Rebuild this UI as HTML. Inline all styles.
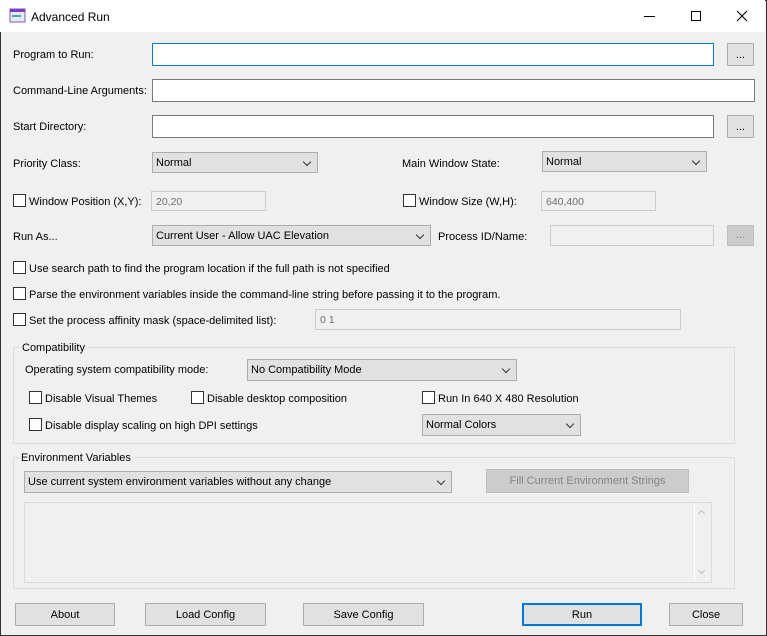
<!DOCTYPE html>
<html><head><style>
*{box-sizing:border-box;margin:0;padding:0}
body{width:767px;height:636px;background:#f0f0f0;font-family:"Liberation Sans",sans-serif;font-size:11px;color:#000;position:relative;overflow:hidden}
.win{position:absolute;left:0;top:0;width:767px;height:636px;border:1px solid #333;}
.tb{position:absolute;left:0;top:0;width:765px;height:32px;background:#fff}
.a{position:absolute;white-space:nowrap}
.l{margin-top:2px}
.in{position:absolute;background:#fff;border:1px solid #7a7a7a}
.in.f{border-color:#0078d7}
.dis{position:absolute;background:#f0f0f0;border:1px solid #ccc;color:#6d6d6d;padding:4px 4px;font-size:10.5px}
.btn{position:absolute;background:#e1e1e1;border:1px solid #adadad;text-align:center;line-height:22px}
.btn.d{background:#ccc;border-color:#bfbfbf;color:#838383}
.sel{position:absolute;background:#e1e1e1;border:1px solid #adadad;padding:0 3px;line-height:21px}
.sel:after{content:"";position:absolute;right:7px;top:6px;width:5px;height:5px;border-right:1px solid #333;border-bottom:1px solid #333;transform:rotate(45deg)}
.cb{position:absolute;width:13px;height:13px;border:1px solid #333;background:#fff}
.grp{position:absolute;border:1px solid #dcdcdc}
.gl{position:absolute;background:#f0f0f0;padding:0 2px}
</style></head><body>
<div class="win"></div>
<div class="tb">
 <svg class="a" style="left:9px;top:8px" width="17" height="15"><rect x="1" y="1" width="15" height="13" fill="#e8e8f4" stroke="#7a5ca8"/><rect x="1" y="1" width="15" height="3" fill="#7b3fbf"/><rect x="3" y="7" width="9" height="2" fill="#4ab"/></svg>
 <div class="a" style="left:31px;top:10px;font-size:12px">Advanced Run</div>
 <div class="a" style="left:644px;top:16px;width:11px;height:1px;background:#000"></div>
 <div class="a" style="left:691px;top:11px;width:10px;height:10px;border:1px solid #000"></div>
 <svg class="a" style="left:736px;top:10px" width="12" height="12"><path d="M1 1L11 11M11 1L1 11" stroke="#000" stroke-width="1.1"/></svg>
</div>

<div class="a l" style="left:13px;top:47px">Program to Run:</div>
<div class="in f" style="left:152px;top:43px;width:562px;height:23px"></div>
<div class="btn" style="left:727px;top:43px;width:27px;height:23px">...</div>

<div class="a l" style="left:13px;top:83px">Command-Line Arguments:</div>
<div class="in" style="left:152px;top:79px;width:603px;height:23px"></div>

<div class="a l" style="left:13px;top:119px">Start Directory:</div>
<div class="in" style="left:152px;top:115px;width:562px;height:23px"></div>
<div class="btn" style="left:727px;top:115px;width:27px;height:23px">...</div>

<div class="a l" style="left:13px;top:156px">Priority Class:</div>
<div class="sel" style="left:152px;top:152px;width:166px;height:21px">Normal</div>
<div class="a l" style="left:402px;top:156px">Main Window State:</div>
<div class="sel" style="left:542px;top:151px;width:165px;height:21px">Normal</div>

<div class="cb" style="left:13px;top:194px"></div>
<div class="a l" style="left:29px;top:194px">Window Position (X,Y):</div>
<div class="dis" style="left:151px;top:191px;width:115px;height:20px">20,20</div>
<div class="cb" style="left:403px;top:194px"></div>
<div class="a l" style="left:419px;top:194px">Window Size (W,H):</div>
<div class="dis" style="left:541px;top:191px;width:115px;height:20px">640,400</div>

<div class="a l" style="left:13px;top:229px">Run As...</div>
<div class="sel" style="left:152px;top:225px;width:279px;height:21px">Current User - Allow UAC Elevation</div>
<div class="a l" style="left:438px;top:229px">Process ID/Name:</div>
<div class="dis" style="left:550px;top:225px;width:164px;height:21px"></div>
<div class="btn d" style="left:727px;top:225px;width:27px;height:21px;line-height:19px">...</div>

<div class="cb" style="left:13px;top:261px"></div>
<div class="a l" style="left:29px;top:261px">Use search path to find the program location if the full path is not specified</div>
<div class="cb" style="left:13px;top:287px"></div>
<div class="a l" style="left:29px;top:287px">Parse the environment variables inside the command-line string before passing it to the program.</div>
<div class="cb" style="left:13px;top:313px"></div>
<div class="a l" style="left:29px;top:313px">Set the process affinity mask (space-delimited list):</div>
<div class="dis" style="left:315px;top:309px;width:366px;height:21px">0 1</div>

<div class="grp" style="left:13px;top:347px;width:722px;height:97px"></div>
<div class="gl" style="left:20px;top:342px">Compatibility</div>
<div class="a l" style="left:25px;top:362px">Operating system compatibility mode:</div>
<div class="sel" style="left:247px;top:359px;width:270px;height:22px">No Compatibility Mode</div>
<div class="cb" style="left:29px;top:391px"></div>
<div class="a l" style="left:45px;top:391px">Disable Visual Themes</div>
<div class="cb" style="left:191px;top:391px"></div>
<div class="a l" style="left:207px;top:391px">Disable desktop composition</div>
<div class="cb" style="left:422px;top:391px"></div>
<div class="a l" style="left:438px;top:391px">Run In 640 X 480 Resolution</div>
<div class="cb" style="left:29px;top:418px"></div>
<div class="a l" style="left:45px;top:418px">Disable display scaling on high DPI settings</div>
<div class="sel" style="left:422px;top:414px;width:159px;height:22px">Normal Colors</div>

<div class="grp" style="left:13px;top:457px;width:722px;height:132px"></div>
<div class="gl" style="left:19px;top:452px">Environment Variables</div>
<div class="sel" style="left:24px;top:471px;width:428px;height:22px">Use current system environment variables without any change</div>
<div class="btn d" style="left:486px;top:469px;width:203px;height:24px">Fill Current Environment Strings</div>
<div class="a" style="left:24px;top:502px;width:688px;height:81px;border:1px solid #d9d9d9;background:#f0f0f0"></div>
<div class="a" style="left:694px;top:503px;width:17px;height:79px;border-left:1px solid #fff"></div>
<div class="a" style="left:699px;top:511px;width:5px;height:5px;border-left:1px solid #bbb;border-top:1px solid #bbb;transform:rotate(45deg)"></div>
<div class="a" style="left:699px;top:568px;width:5px;height:5px;border-right:1px solid #bbb;border-bottom:1px solid #bbb;transform:rotate(45deg)"></div>

<div class="btn" style="left:15px;top:603px;width:100px;height:23px">About</div>
<div class="btn" style="left:145px;top:603px;width:121px;height:23px">Load Config</div>
<div class="btn" style="left:303px;top:603px;width:121px;height:23px">Save Config</div>
<div class="btn" style="left:522px;top:603px;width:120px;height:23px;border:2px solid #0078d7;line-height:20px">Run</div>
<div class="btn" style="left:669px;top:603px;width:74px;height:23px">Close</div>
</body></html>
